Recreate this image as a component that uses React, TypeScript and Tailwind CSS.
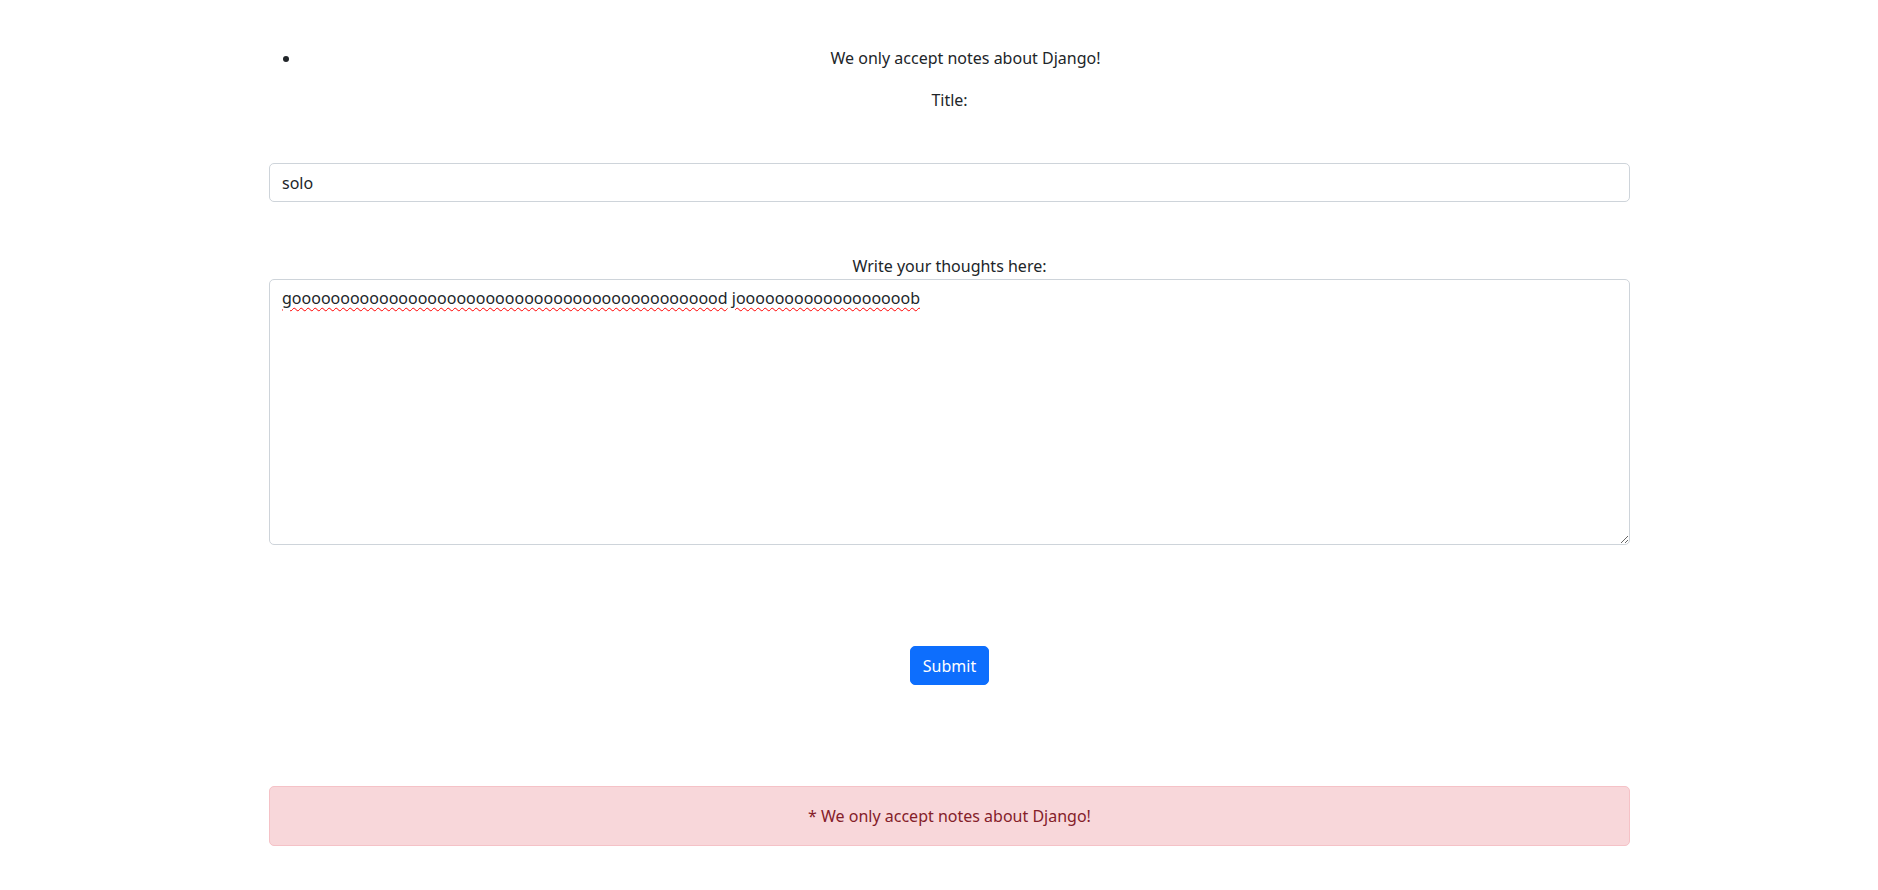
export default function App() {
  const first = 'g' + 'o'.repeat(44) + 'd';
  const second = 'j' + 'o'.repeat(18) + 'b';

  return (
    <div className="min-h-screen bg-white text-[#212529] text-[16px] leading-6 font-['Noto_Sans',sans-serif] pt-[46px]">
      <div className="ml-[269px] w-[1361px]">
        <ul className="list-disc pl-8 mb-[18px] text-center">
          <li>We only accept notes about Django!</li>
        </ul>

        <form className="flex flex-col" onSubmit={(e) => e.preventDefault()}>
          <p className="text-center">Title:</p>
          <input
            type="text"
            defaultValue="solo"
            className="mt-[51px] h-[39px] w-full px-3 border border-[#ced4da] rounded-[5px] bg-white outline-none"
          />

          <label className="mt-[52px] text-center">Write your thoughts here:</label>
          <div className="relative mt-px h-[266px] w-full px-3 py-[6px] border border-[#ced4da] rounded-[5px] bg-white overflow-auto resize-y">
            <span className="underline decoration-wavy decoration-[#ff0000] decoration-1 underline-offset-[3px]">
              {first}
            </span>{' '}
            <span className="underline decoration-wavy decoration-[#ff0000] decoration-1 underline-offset-[3px]">
              {second}
            </span>
          </div>

          <div className="flex justify-center mt-[101px]">
            <button
              type="submit"
              className="h-[39px] px-3 bg-[#0d6efd] text-white rounded-[5px] border border-[#0d6efd]"
            >
              Submit
            </button>
          </div>
        </form>

        <div className="mt-[101px] h-[60px] flex items-center justify-center border border-[#f5c2c7] bg-[#f8d7da] text-[#842029] rounded-[5px]">
          * We only accept notes about Django!
        </div>
      </div>
    </div>
  );
}
